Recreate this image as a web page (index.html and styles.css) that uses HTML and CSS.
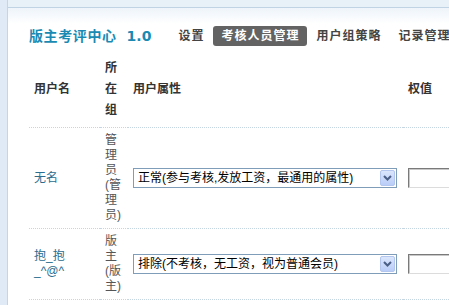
FILE: index.html
```html
<!DOCTYPE html>
<html>
<head>
  <meta charset="utf-8">
  <title>版主考评中心</title>
  <link rel="stylesheet" href="styles.css">
</head>
<body>
  <div class="frame">
    <div class="side"></div>
    <div class="main">
      <div class="topbar"></div>

      <div class="header">
        <h1 class="title">版主考评中心<span class="ver">1.0</span></h1>
        <ul class="nav">
          <li><a href="#">设置</a></li>
          <li class="current"><a href="#">考核人员管理</a></li>
          <li><a href="#">用户组策略</a></li>
          <li><a href="#">记录管理</a></li>
        </ul>
      </div>

      <table class="list">
        <colgroup>
          <col class="c-name">
          <col class="c-group">
          <col class="c-attr">
          <col class="c-weight">
        </colgroup>
        <thead>
          <tr>
            <th>用户名</th>
            <th>所在组</th>
            <th>用户属性</th>
            <th>权值</th>
          </tr>
        </thead>
        <tbody>
          <tr>
            <td class="name"><a href="#">无名</a></td>
            <td class="group">管理员(管理员)</td>
            <td>
              <div class="select-wrap">
                <select>
                  <option>正常(参与考核,发放工资，最通用的属性)</option>
                  <option>排除(不考核，无工资，视为普通会员)</option>
                </select>
                <span class="arrow"><svg width="9" height="6" viewBox="0 0 9 6"><path d="M1 1 L4.5 4.5 L8 1" fill="none" stroke="#4a5f86" stroke-width="2"/></svg></span>
              </div>
            </td>
            <td><input type="text" class="weight"></td>
          </tr>
          <tr>
            <td class="name"><a href="#">抱_抱_^@^</a></td>
            <td class="group">版主(版主)</td>
            <td>
              <div class="select-wrap">
                <select>
                  <option>排除(不考核，无工资，视为普通会员)</option>
                  <option>正常(参与考核,发放工资，最通用的属性)</option>
                </select>
                <span class="arrow"><svg width="9" height="6" viewBox="0 0 9 6"><path d="M1 1 L4.5 4.5 L8 1" fill="none" stroke="#4a5f86" stroke-width="2"/></svg></span>
              </div>
            </td>
            <td><input type="text" class="weight"></td>
          </tr>
          <tr>
            <td class="name"><a href="#">小鱼</a></td>
            <td class="group">版主(版主)</td>
            <td>
              <div class="select-wrap">
                <select>
                  <option>正常(参与考核,发放工资，最通用的属性)</option>
                </select>
                <span class="arrow"><svg width="9" height="6" viewBox="0 0 9 6"><path d="M1 1 L4.5 4.5 L8 1" fill="none" stroke="#4a5f86" stroke-width="2"/></svg></span>
              </div>
            </td>
            <td><input type="text" class="weight"></td>
          </tr>
        </tbody>
      </table>
    </div>
  </div>
</body>
</html>
```

FILE: styles.css
```css
html,
body {
  margin: 0;
  height: 100%;
  overflow: hidden;
  background: #fff;
}

body {
  font-family: "Liberation Sans", "Noto Sans CJK SC", sans-serif;
  font-size: 12px;
  color: #555;
}

.frame {
  display: flex;
  min-height: 100%;
}

.side {
  flex: none;
  width: 7px;
  background: #dfeaf6;
  border-right: 1px solid #c4d5e6;
}

.main {
  flex: 1;
}

.topbar {
  height: 7px;
  background: #e8f0f8;
  border-bottom: 1px solid #c0d3e4;
}

.header {
  display: flex;
  align-items: center;
  padding: 18px 0 8px 21px;
  background: linear-gradient(#eef4fa, #fff 16px);
}

.title {
  margin: 0 19px 0 0;
  font-family: "DejaVu Sans", "Noto Sans CJK SC", sans-serif;
  font-size: 14px;
  line-height: 20px;
  letter-spacing: 0.6px;
  color: #1b8ab3;
}

.ver {
  margin-left: 10px;
  letter-spacing: 0;
}

.nav {
  display: flex;
  margin: 0;
  padding: 0;
  list-style: none;
}

.nav li {
  margin-right: 1px;
}

.nav a {
  display: block;
  padding: 0 8px;
  height: 20px;
  line-height: 20px;
  font-weight: bold;
  letter-spacing: 1px;
  color: #444;
  text-decoration: none;
  border-radius: 3px;
}

.nav .current a {
  background: #636363;
  color: #fff;
}

.list {
  margin-left: 21px;
  width: 474px;
  table-layout: fixed;
  border-collapse: collapse;
}

.c-name { width: 71px; }
.c-group { width: 28px; }
.c-attr { width: 275px; }
.c-weight { width: 100px; }

.list th {
  padding: 4px 5px 6px;
  text-align: left;
  vertical-align: middle;
  font-weight: bold;
  line-height: 21px;
  color: #333;
  border-bottom: 1px dotted #c6d5e2;
}

.list td {
  padding: 5px;
  vertical-align: middle;
  line-height: 15px;
  border-bottom: 1px dotted #c6d5e2;
}

.list td.name {
  padding-right: 9px;
}

.name a {
  color: #2a6d8f;
  text-decoration: none;
}

.select-wrap {
  position: relative;
  width: 264px;
  height: 20px;
}

.select-wrap select {
  appearance: none;
  -webkit-appearance: none;
  box-sizing: border-box;
  width: 100%;
  height: 20px;
  margin: 0;
  padding: 0 0 0 4px;
  border: 1px solid #7f9db9;
  border-radius: 0;
  background: #fff;
  font-family: "Liberation Sans", "Noto Sans CJK SC", sans-serif;
  font-size: 12px;
  color: #000;
}

.arrow {
  position: absolute;
  top: 2px;
  right: 2px;
  bottom: 2px;
  width: 13px;
  display: flex;
  align-items: center;
  justify-content: center;
  background: linear-gradient(#dbe6fc, #b9cdf7);
  border: 1px solid #b3c6ef;
  border-radius: 2px;
  pointer-events: none;
}

.weight {
  box-sizing: border-box;
  width: 90px;
  height: 20px;
  margin: 0;
  padding: 0 3px;
  border: 1px solid;
  border-color: #7a7a7a #dcdcdc #dcdcdc #7a7a7a;
  box-shadow: inset 1px 1px 0 #c8c8c8;
  background: #fff;
  font-size: 12px;
}
```
